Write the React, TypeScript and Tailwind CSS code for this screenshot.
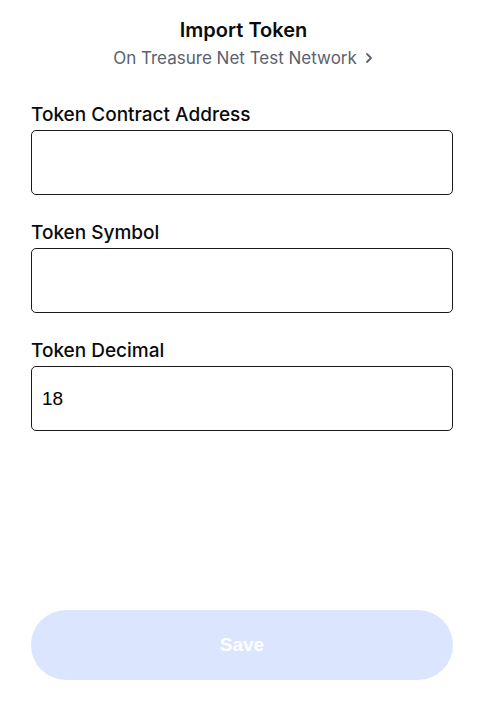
import React from 'react';

const Field = ({ label, value }: { label: string; value?: string }) => (
  <div className="flex flex-col">
    <label className="text-[19px] leading-[24px] font-medium text-[#0a0b0d] mb-[3px]">{label}</label>
    <input
      defaultValue={value}
      className="h-[65px] w-full rounded-[5px] border-[1.5px] border-[#1b1b1b] px-[10px] text-[19px] text-black outline-none font-['Liberation_Sans',Arial,sans-serif]"
    />
  </div>
);

export default function App() {
  return (
    <div className="w-[487px] h-[710px] bg-white flex flex-col pl-[31px] pr-[34px] font-['Inter',sans-serif]">
      <div className="flex flex-col items-center pt-[18px] pl-[3px]">
        <h1 className="text-[20px] leading-[25px] font-semibold text-[#0a0b0d]">Import Token</h1>
        <div className="mt-[4px] flex items-center gap-[7px] text-[17px] leading-[22px] text-[#5b616e]">
          <span>On Treasure Net Test Network</span>
          <svg width="10" height="12" viewBox="0 0 10 12" fill="none">
            <path d="M3 2l4 4-4 4" stroke="#5b616e" strokeWidth="1.8" strokeLinecap="round" strokeLinejoin="round" />
          </svg>
        </div>
      </div>

      <div className="mt-[34px] flex flex-col gap-[26px]">
        <Field label="Token Contract Address" />
        <Field label="Token Symbol" />
        <Field label="Token Decimal" value="18" />
      </div>

      <div className="flex-1" />

      <button className="mb-[30px] h-[70px] w-full rounded-full bg-[#dbe5fd] text-white text-[19px] font-bold font-['Liberation_Sans',Arial,sans-serif]">
        Save
      </button>
    </div>
  );
}
